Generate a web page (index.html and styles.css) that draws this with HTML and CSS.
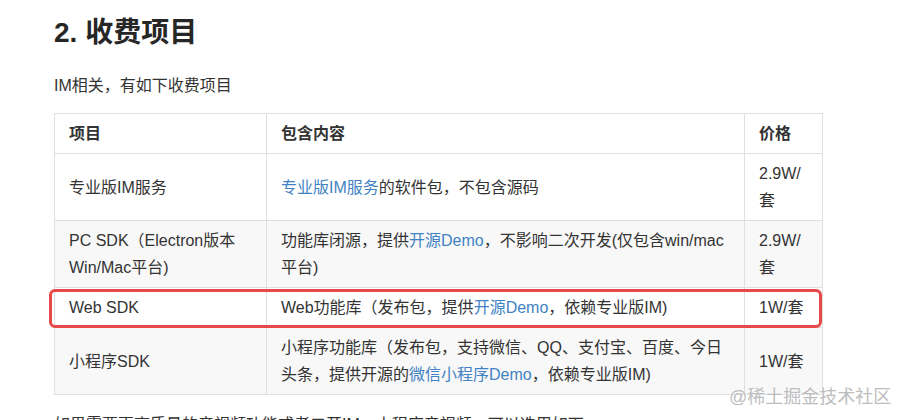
FILE: index.html
```html
<!DOCTYPE html>
<html lang="zh-CN">
<head>
    <meta charset="UTF-8">
    <meta name="viewport" content="width=device-width, initial-scale=1.0">
    <title>收费项目</title>
    <link rel="stylesheet" href="styles.css">
</head>
<body>
    <div class="article">
        <h2>2. 收费项目</h2>
        <p>IM相关，有如下收费项目</p>
        <div class="table-wrap">
            <table>
                <colgroup>
                    <col class="col-name">
                    <col class="col-desc">
                    <col class="col-price">
                </colgroup>
                <thead>
                    <tr>
                        <th>项目</th>
                        <th>包含内容</th>
                        <th>价格</th>
                    </tr>
                </thead>
                <tbody>
                    <tr>
                        <td>专业版IM服务</td>
                        <td><a href="#">专业版IM服务</a>的软件包，不包含源码</td>
                        <td>2.9W/套</td>
                    </tr>
                    <tr>
                        <td>PC SDK（Electron版本Win/Mac平台)</td>
                        <td>功能库闭源，提供<a href="#">开源Demo</a>，不影响二次开发(仅包含win/mac平台)</td>
                        <td>2.9W/套</td>
                    </tr>
                    <tr>
                        <td>Web SDK</td>
                        <td>Web功能库（发布包，提供<a href="#">开源Demo</a>，依赖专业版IM)</td>
                        <td>1W/套</td>
                    </tr>
                    <tr>
                        <td>小程序SDK</td>
                        <td>小程序功能库（发布包，支持微信、QQ、支付宝、百度、今日头条，提供开源的<a href="#">微信小程序Demo</a>，依赖专业版IM)</td>
                        <td>1W/套</td>
                    </tr>
                </tbody>
            </table>
            <!-- highlight around the Web SDK row -->
            <div class="mark"></div>
        </div>
        <p>如果需要更高质量的音视频功能或者二开IM，小程序音视频，可以选用如下</p>
    </div>
    <div class="watermark">@稀土掘金技术社区</div>
</body>
</html>
```

FILE: styles.css
```css
html {
    overflow: hidden;
}
body {
    margin: 0;
    padding: 0;
    background: #fff;
    color: #333;
    font-family: "Liberation Sans", "Noto Sans CJK SC", sans-serif;
    font-size: 16px;
    line-height: 27px;
}
.article {
    padding-left: 54px;
}
.article h2 {
    margin: 13px 0 0;
    font-size: 28px;
    line-height: 40px;
    font-weight: bold;
    color: #262626;
}
.article p {
    margin: 19px 0 0;
}
.article a {
    color: #4183c4;
    text-decoration: none;
}
.table-wrap {
    position: relative;
    width: 769px;
    margin-top: 14px;
}
.table-wrap table {
    width: 769px;
    border-collapse: collapse;
    table-layout: fixed;
}
.col-name {
    width: 212px;
}
.col-desc {
    width: 478px;
}
.table-wrap th,
.table-wrap td {
    border: 1px solid #dfdfdf;
    padding: 6px 14px;
    text-align: left;
    vertical-align: middle;
}
.table-wrap th {
    font-weight: bold;
}
.table-wrap tbody tr:nth-child(2n) {
    background: #f8f8f8;
}
.mark {
    position: absolute;
    left: -5px;
    top: 176px;
    width: 773px;
    height: 39px;
    box-sizing: border-box;
    border: 3px solid #e94848;
    border-radius: 6px;
}
.table-wrap + p {
    margin-top: 16px;
}
.watermark {
    position: absolute;
    left: 729px;
    top: 385px;
    font-size: 18px;
    line-height: 24px;
    color: #bdbdbd;
    text-shadow: 0 0 2px #fff;
    white-space: nowrap;
}
```
